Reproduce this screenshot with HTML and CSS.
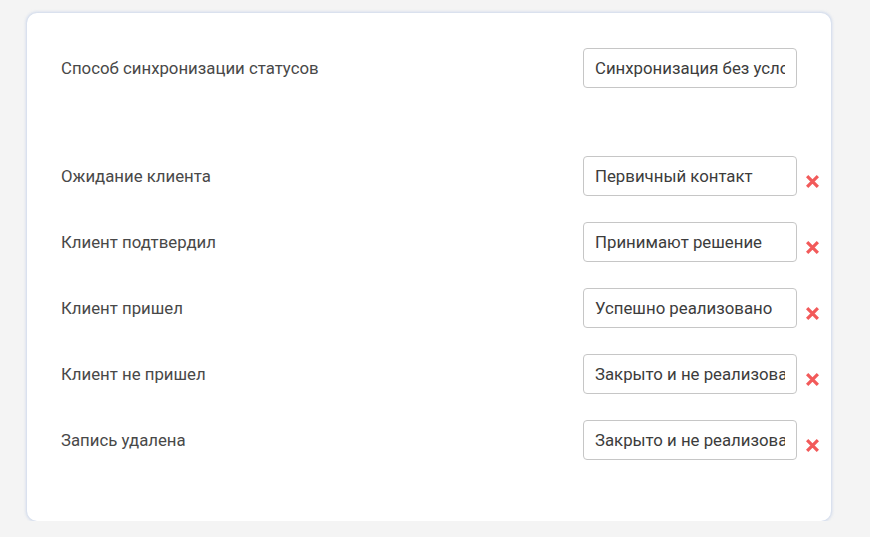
FILE: index.html
```html
<!DOCTYPE html>
<html lang="ru">
<head>
  <meta charset="UTF-8" />
  <title>Синхронизация статусов</title>
  <link rel="stylesheet" href="styles.css">
</head>
<body>
  <div class="card">
    <div class="row row-main">
      <div class="label">Способ синхронизации статусов</div>
      <input class="field" type="text" value="Синхронизация без условий" readonly />
      <span class="spacer"></span>
    </div>

    <div class="row">
      <div class="label">Ожидание клиента</div>
      <input class="field" type="text" value="Первичный контакт" readonly />
      <span class="remove" title="Удалить">
        <svg viewBox="0 0 14 14" width="15" height="15"><path d="M2 2 L12 12 M12 2 L2 12" /></svg>
      </span>
    </div>
    <div class="row">
      <div class="label">Клиент подтвердил</div>
      <input class="field" type="text" value="Принимают решение" readonly />
      <span class="remove" title="Удалить">
        <svg viewBox="0 0 14 14" width="15" height="15"><path d="M2 2 L12 12 M12 2 L2 12" /></svg>
      </span>
    </div>
    <div class="row">
      <div class="label">Клиент пришел</div>
      <input class="field" type="text" value="Успешно реализовано" readonly />
      <span class="remove" title="Удалить">
        <svg viewBox="0 0 14 14" width="15" height="15"><path d="M2 2 L12 12 M12 2 L2 12" /></svg>
      </span>
    </div>
    <div class="row">
      <div class="label">Клиент не пришел</div>
      <input class="field" type="text" value="Закрыто и не реализовано" readonly />
      <span class="remove" title="Удалить">
        <svg viewBox="0 0 14 14" width="15" height="15"><path d="M2 2 L12 12 M12 2 L2 12" /></svg>
      </span>
    </div>
    <div class="row">
      <div class="label">Запись удалена</div>
      <input class="field" type="text" value="Закрыто и не реализовано" readonly />
      <span class="remove" title="Удалить">
        <svg viewBox="0 0 14 14" width="15" height="15"><path d="M2 2 L12 12 M12 2 L2 12" /></svg>
      </span>
    </div>
  </div>
</body>
</html>
```

FILE: styles.css
```css
body {
  margin: 0;
  background: #f4f4f4;
  font-family: Roboto, 'Noto Sans', sans-serif;
  color: #444;
}
.card {
  box-sizing: border-box;
  width: 804px;
  height: 508px;
  margin: 13px 0 0 27px;
  padding: 35px 10px 0 34px;
  background: #fff;
  border-radius: 10px;
  box-shadow: 0 0 3px 1px rgba(170, 190, 225, 0.55);
  display: flex;
  flex-direction: column;
  gap: 26px;
}
.row {
  display: flex;
  align-items: center;
}
.row-main {
  margin-bottom: 42px;
}
.label {
  flex: 1;
  font-size: 16.8px;
  color: #484848;
}
.field {
  box-sizing: border-box;
  width: 214px;
  height: 40px;
  padding: 0 11px;
  border: 1px solid #c6c6c6;
  border-radius: 4px;
  font-family: Roboto, 'Noto Sans', sans-serif;
  font-size: 16.8px;
  color: #3c3c3c;
  background: #fff;
  outline: none;
}
.spacer {
  width: 16px;
  margin-left: 8px;
}
.remove {
  width: 17px;
  margin-left: 7px;
  margin-top: 10px;
  display: flex;
  justify-content: center;
  cursor: pointer;
}
.remove path {
  stroke: #f25a5a;
  stroke-width: 3;
  fill: none;
}
```
